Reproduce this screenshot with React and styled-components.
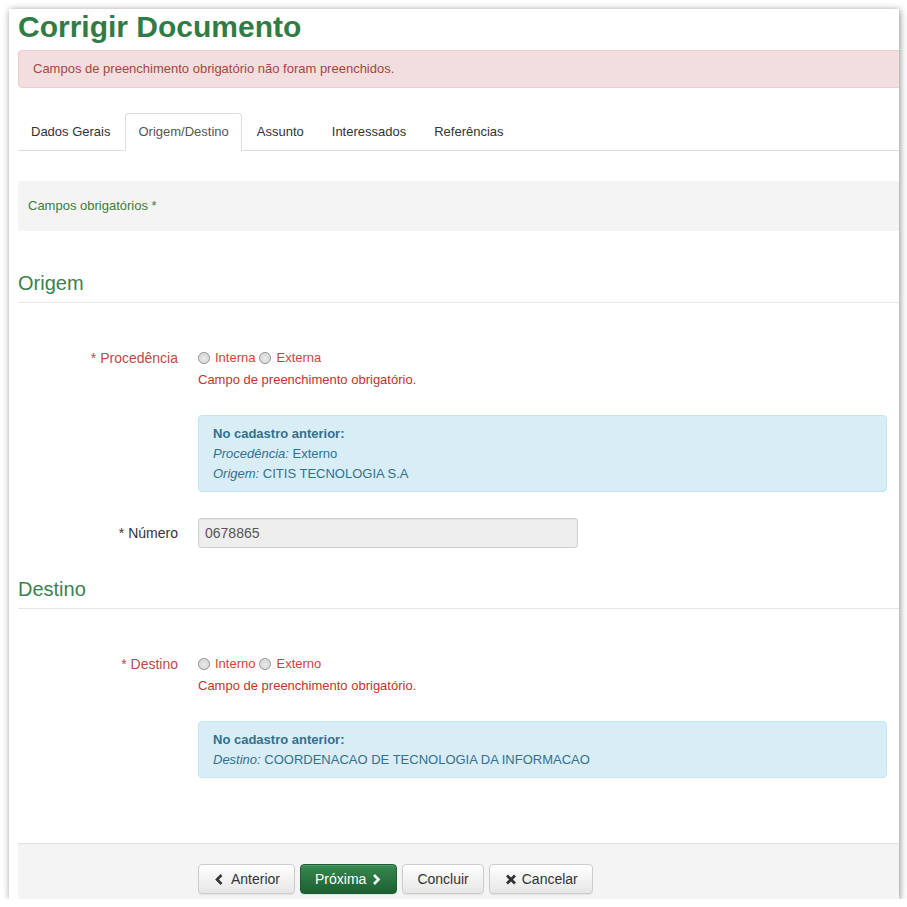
import React from "react";
import styled, { createGlobalStyle, css } from "styled-components";

const GlobalStyle = createGlobalStyle`
  html, body { margin: 0; padding: 0; background: #ffffff; }
  body { font-family: "Liberation Sans", Arial, sans-serif; color: #333; }
  * { box-sizing: border-box; }
`;

const Frame = styled.div`
  width: 890px;
  height: 890px;
  margin: 9px 0 0 9px;
  background: #fff;
  overflow: hidden;
  box-shadow: 1px 1px 7px rgba(0, 0, 0, 0.45);
`;

const Page = styled.div`
  width: 930px;
  padding-left: 9px;
  display: flex;
  flex-direction: column;
`;

const Title = styled.h1`
  margin: 1px 0 7px;
  font-size: 30px;
  line-height: 33px;
  font-weight: bold;
  color: #2f7d45;
`;

const Alert = styled.div`
  height: 38px;
  padding: 9px 14px;
  font-size: 13px;
  line-height: 18px;
  color: #a94442;
  background: #f2dede;
  border: 1px solid #ebccd1;
  border-radius: 4px 0 0 4px;
`;

const Tabs = styled.ul`
  display: flex;
  list-style: none;
  margin: 25px 0 0;
  padding: 0;
  border-bottom: 1px solid #ddd;
  height: 38px;
`;

const Tab = styled.li`
  margin-right: 2px;
  height: 38px;
  padding: 9px 12px;
  font-size: 13px;
  line-height: 18px;
  border: 1px solid transparent;
  border-radius: 4px 4px 0 0;
  color: #333;
  ${(p) =>
    p.$active &&
    css`
      color: #555;
      background: #fff;
      border-color: #ddd #ddd transparent #ddd;
    `}
`;

const Notice = styled.div`
  margin-top: 30px;
  height: 50px;
  padding: 16px 10px;
  font-size: 13px;
  line-height: 18px;
  background: #f4f4f4;
  color: #3d7b3a;
`;

const SectionTitle = styled.h3`
  margin: ${(p) => p.$top}px 0 0;
  padding-bottom: 8px;
  font-size: 20px;
  line-height: 22px;
  font-weight: normal;
  color: #3b8150;
  border-bottom: 1px solid #e5e5e5;
`;

const FormRow = styled.div`
  display: grid;
  grid-template-columns: 160px 689px;
  column-gap: 20px;
  margin-top: ${(p) => p.$top}px;
  align-items: ${(p) => (p.$center ? "center" : "start")};
`;

const Label = styled.label`
  text-align: right;
  font-size: 14px;
  line-height: 20px;
  color: ${(p) => (p.$error ? "#b94a48" : "#333")};
`;

const Control = styled.div`
  display: flex;
  flex-direction: column;
`;

const RadioLine = styled.div`
  display: flex;
  align-items: center;
  font-size: 13px;
  line-height: 20px;
`;

const RadioOption = styled.span`
  display: inline-flex;
  align-items: center;
  gap: 5px;
  margin-right: 4px;
  color: #d43f3a;
`;

const RadioDot = styled.span`
  display: inline-block;
  width: 12px;
  height: 12px;
  border-radius: 50%;
  border: 1px solid #8f8f8f;
  background: radial-gradient(circle at 50% 55%, #eeeeee 0%, #d6d6d6 55%, #bdbdbd 100%);
  box-shadow: inset 0 0 0 1px #ececec;
`;

const ErrorText = styled.div`
  margin-top: 2px;
  font-size: 13px;
  line-height: 20px;
  color: #c9302c;
`;

const InfoBox = styled.div`
  margin-top: 25px;
  padding: 8px 14px 7px;
  background: #d9edf7;
  border: 1px solid #bce8f1;
  border-radius: 4px;
  color: #31708f;
  font-size: 13px;
  line-height: 20px;
`;

const InfoHead = styled.div`
  font-weight: bold;
`;

const InfoKey = styled.em`
  font-style: italic;
`;

const Input = styled.div`
  width: 380px;
  height: 30px;
  padding: 0 6px;
  font-size: 14px;
  line-height: 28px;
  color: #555;
  background: #eeeeee;
  border: 1px solid #ccc;
  border-radius: 3px;
  box-shadow: inset 0 1px 1px rgba(0, 0, 0, 0.05);
`;

const Footer = styled.div`
  margin-top: 65px;
  height: 80px;
  padding: 20px 0 0 180px;
  background: #f4f4f4;
  border-top: 1px solid #e2e2e2;
  display: flex;
  align-items: flex-start;
  gap: 5px;
`;

const Button = styled.button`
  height: 30px;
  padding: 0 14px;
  display: inline-flex;
  align-items: center;
  gap: 4px;
  font-family: "Liberation Sans", Arial, sans-serif;
  font-size: 14px;
  border-radius: 4px;
  border: 1px solid #ccc;
  color: #333;
  background: linear-gradient(#ffffff, #e6e6e6);
  box-shadow: inset 0 1px 0 rgba(255, 255, 255, 0.15), 0 1px 1px rgba(0, 0, 0, 0.075);
  ${(p) =>
    p.$primary &&
    css`
      color: #fff;
      border-color: #1b5e30;
      background: linear-gradient(#38894f, #1c5f31);
    `}
`;

const Glyph = styled.svg`
  display: block;
  flex: none;
`;

const ChevronLeft = () => (
  <Glyph width="14" height="11" viewBox="0 0 14 11">
    <path d="M8.5 1 L4 5.5 L8.5 10" fill="none" stroke="currentColor" strokeWidth="2.6" />
  </Glyph>
);

const ChevronRight = () => (
  <Glyph width="12" height="11" viewBox="0 0 12 11">
    <path d="M4 1 L8.5 5.5 L4 10" fill="none" stroke="currentColor" strokeWidth="2.6" />
  </Glyph>
);

const Cross = () => (
  <Glyph width="14" height="11" viewBox="0 0 14 11">
    <path d="M3 1.5 L11 9.5 M11 1.5 L3 9.5" fill="none" stroke="currentColor" strokeWidth="2.8" />
  </Glyph>
);

const tabs = ["Dados Gerais", "Origem/Destino", "Assunto", "Interessados", "Referências"];

const RadioGroup = ({ options }) => (
  <RadioLine>
    {options.map((o) => (
      <RadioOption key={o}>
        <RadioDot />
        {o}
      </RadioOption>
    ))}
  </RadioLine>
);

export default function App() {
  return (
    <>
      <GlobalStyle />
      <Frame>
        <Page>
          <Title>Corrigir Documento</Title>
          <Alert>Campos de preenchimento obrigatório não foram preenchidos.</Alert>
          <Tabs>
            {tabs.map((t) => (
              <Tab key={t} $active={t === "Origem/Destino"}>
                {t}
              </Tab>
            ))}
          </Tabs>
          <Notice>Campos obrigatórios *</Notice>

          <SectionTitle $top={41}>Origem</SectionTitle>
          <FormRow $top={45}>
            <Label $error>* Procedência</Label>
            <Control>
              <RadioGroup options={["Interna", "Externa"]} />
              <ErrorText>Campo de preenchimento obrigatório.</ErrorText>
              <InfoBox>
                <InfoHead>No cadastro anterior:</InfoHead>
                <div>
                  <InfoKey>Procedência:</InfoKey> Externo
                </div>
                <div>
                  <InfoKey>Origem:</InfoKey> CITIS TECNOLOGIA S.A
                </div>
              </InfoBox>
            </Control>
          </FormRow>
          <FormRow $top={26} $center>
            <Label>* Número</Label>
            <Input>0678865</Input>
          </FormRow>

          <SectionTitle $top={30}>Destino</SectionTitle>
          <FormRow $top={45}>
            <Label $error>* Destino</Label>
            <Control>
              <RadioGroup options={["Interno", "Externo"]} />
              <ErrorText>Campo de preenchimento obrigatório.</ErrorText>
              <InfoBox>
                <InfoHead>No cadastro anterior:</InfoHead>
                <div>
                  <InfoKey>Destino:</InfoKey> COORDENACAO DE TECNOLOGIA DA INFORMACAO
                </div>
              </InfoBox>
            </Control>
          </FormRow>

          <Footer>
            <Button>
              <ChevronLeft />
              Anterior
            </Button>
            <Button $primary>
              Próxima
              <ChevronRight />
            </Button>
            <Button>Concluir</Button>
            <Button>
              <Cross />
              Cancelar
            </Button>
          </Footer>
        </Page>
      </Frame>
    </>
  );
}
